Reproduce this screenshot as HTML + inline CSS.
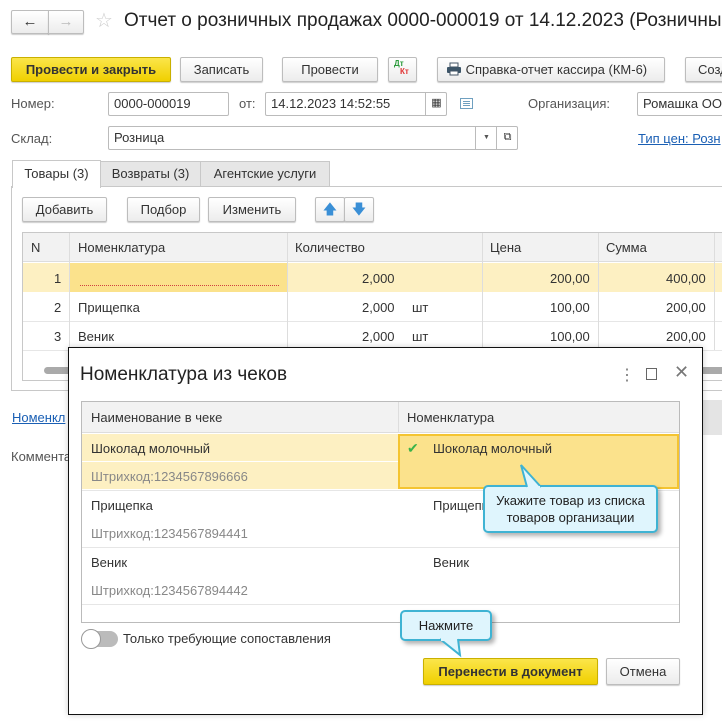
<!DOCTYPE html>
<html><head><meta charset="utf-8"><style>
*{box-sizing:border-box;margin:0;padding:0}
body{width:722px;height:721px;overflow:hidden;background:#fff;font-family:"Liberation Sans",Arial,sans-serif;font-size:13px;color:#333;position:relative}
.a{position:absolute}
.btn{position:absolute;border:1px solid #bdbdbd;border-radius:2px;background:linear-gradient(#fff,#ececec);box-shadow:0 1px 1px rgba(0,0,0,.2);text-align:center;line-height:23px;color:#333;white-space:nowrap;overflow:hidden}
.y{background:linear-gradient(#fbe54a,#f0d000);border-color:#c9b000;color:#333;font-weight:bold}
.inp{position:absolute;border:1px solid #bbb;border-radius:2px;background:#fff;height:24px;line-height:22px;padding-left:5px;color:#333;white-space:nowrap;overflow:hidden}
.lbl{position:absolute;color:#555}
.cell{position:absolute;white-space:nowrap}
.callout{position:absolute;background:#dff5fd;border:2px solid #3fb3d3;border-radius:5px;box-shadow:3px 3px 4px rgba(0,0,0,.3);text-align:center;color:#222;font-size:13px}
</style></head><body>

<!-- nav -->
<div class="btn" style="left:11px;top:10px;width:38px;height:24px;line-height:21px;font-size:15px;border-radius:2px 0 0 2px">&#8592;</div>
<div class="btn" style="left:48px;top:10px;width:36px;height:24px;line-height:21px;font-size:15px;color:#bbb;border-radius:0 2px 2px 0">&#8594;</div>
<div class="a" style="left:95px;top:8px;font-size:20px;color:#ccc">&#9734;</div>
<div class="a" style="left:124px;top:10px;font-size:19px;color:#222;white-space:nowrap">Отчет о розничных продажах 0000-000019 от 14.12.2023 (Розничный</div>

<!-- toolbar -->
<div class="btn y" style="left:11px;top:57px;width:160px;height:25px">Провести и закрыть</div>
<div class="btn" style="left:180px;top:57px;width:83px;height:25px">Записать</div>
<div class="btn" style="left:282px;top:57px;width:96px;height:25px">Провести</div>
<div class="btn" style="left:388px;top:57px;width:29px;height:25px"><span class="a" style="left:5px;top:-6px;font-size:8px;color:#2a9a3a;font-weight:bold">Дт</span><span class="a" style="left:11px;top:2px;font-size:8px;color:#e03030;font-weight:bold">Кт</span></div>
<div class="btn" style="left:437px;top:57px;width:228px;height:25px;text-align:left;padding-left:8px"><svg width="16" height="14" style="vertical-align:-2px"><rect x="4" y="1" width="8" height="4" fill="#fff" stroke="#456"/><rect x="1" y="5" width="14" height="6" rx="1" fill="#3d5568"/><rect x="4" y="9" width="8" height="4" fill="#fff" stroke="#456"/></svg> Справка-отчет кассира (КМ-6)</div>
<div class="btn" style="left:685px;top:57px;width:60px;height:25px;text-align:left;padding-left:12px">Созд</div>

<!-- fields -->
<div class="lbl" style="left:11px;top:96px">Номер:</div>
<div class="inp" style="left:108px;top:92px;width:121px">0000-000019</div>
<div class="lbl" style="left:239px;top:96px">от:</div>
<div class="inp" style="left:265px;top:92px;width:182px">14.12.2023 14:52:55</div>
<div class="a" style="left:425px;top:92px;width:22px;height:24px;border-left:1px solid #bbb;text-align:center;line-height:22px;font-size:11px">&#9638;</div>
<svg class="a" style="left:460px;top:98px" width="13" height="11"><rect x=".5" y=".5" width="12" height="10" fill="none" stroke="#6fa0c0"/><path d="M3 3.5h7M3 5.5h7M3 7.5h7" stroke="#6fa0c0"/></svg>
<div class="lbl" style="left:528px;top:96px">Организация:</div>
<div class="inp" style="left:637px;top:92px;width:100px">Ромашка ОО</div>

<div class="lbl" style="left:11px;top:131px">Склад:</div>
<div class="inp" style="left:108px;top:126px;width:410px">Розница</div>
<div class="a" style="left:475px;top:126px;width:22px;height:24px;border-left:1px solid #bbb;text-align:center;line-height:24px;font-size:7px;color:#555">&#9660;</div>
<div class="a" style="left:496px;top:126px;width:22px;height:24px;border-left:1px solid #bbb;text-align:center;line-height:22px;font-size:11px">&#10697;</div>
<div class="a" style="left:638px;top:131px;color:#1a5fb4;text-decoration:underline;white-space:nowrap">Тип цен: Розн</div>

<!-- tabs -->
<div class="a" style="left:11px;top:186px;width:711px;height:205px;border:1px solid #c8c8c8;border-right:none"></div>
<div class="a" style="left:12px;top:160px;width:89px;height:28px;background:#fff;border:1px solid #c8c8c8;border-bottom:none;text-align:center;line-height:26px">Товары (3)</div>
<div class="a" style="left:100px;top:161px;width:101px;height:25px;background:#e6e6e6;border:1px solid #c8c8c8;border-bottom:none;text-align:center;line-height:24px">Возвраты (3)</div>
<div class="a" style="left:200px;top:161px;width:130px;height:25px;background:#e6e6e6;border:1px solid #c8c8c8;border-bottom:none;text-align:center;line-height:24px">Агентские услуги</div>

<div class="btn" style="left:22px;top:197px;width:85px;height:25px">Добавить</div>
<div class="btn" style="left:127px;top:197px;width:73px;height:25px">Подбор</div>
<div class="btn" style="left:208px;top:197px;width:88px;height:25px">Изменить</div>
<div class="btn" style="left:315px;top:197px;width:30px;height:25px;color:#3a8fd6;font-size:14px;line-height:22px">&#129093;</div>
<div class="btn" style="left:344px;top:197px;width:30px;height:25px;color:#3a8fd6;font-size:14px;line-height:22px">&#129095;</div>

<!-- table -->
<div class="a" style="left:22px;top:232px;width:700px;height:149px;border:1px solid #c8c8c8;border-right:none"></div>
<div class="a" style="left:23px;top:233px;width:699px;height:29px;background:#f2f2f2;border-bottom:1px solid #ddd"></div>
<div class="a" style="left:23px;top:263px;width:699px;height:29px;background:#fdf0c2"></div>
<div class="a" style="left:69px;top:263px;width:218px;height:29px;background:#fbe28c"></div>
<div class="a" style="left:80px;top:285px;width:199px;border-top:1px dotted #d04040"></div>
<div class="a" style="left:23px;top:321px;width:699px;border-top:1px solid #e6e6e6"></div>
<div class="a" style="left:23px;top:350px;width:699px;border-top:1px solid #e6e6e6"></div>
<div class="a" style="left:69px;top:233px;height:117px;border-left:1px solid #ddd"></div>
<div class="a" style="left:287px;top:233px;height:117px;border-left:1px solid #ddd"></div>
<div class="a" style="left:482px;top:233px;height:117px;border-left:1px solid #ddd"></div>
<div class="a" style="left:598px;top:233px;height:117px;border-left:1px solid #ddd"></div>
<div class="a" style="left:714px;top:233px;height:117px;border-left:1px solid #ddd"></div>
<div class="cell" style="left:31px;top:240px">N</div>
<div class="cell" style="left:78px;top:240px">Номенклатура</div>
<div class="cell" style="left:295px;top:240px">Количество</div>
<div class="cell" style="left:490px;top:240px">Цена</div>
<div class="cell" style="left:606px;top:240px">Сумма</div>
<div class="cell" style="left:54px;top:271px">1</div>
<div class="cell" style="left:362px;top:271px">2,000</div>
<div class="cell" style="left:550px;top:271px">200,00</div>
<div class="cell" style="left:666px;top:271px">400,00</div>
<div class="cell" style="left:54px;top:300px">2</div><div class="cell" style="left:78px;top:300px">Прищепка</div>
<div class="cell" style="left:362px;top:300px">2,000</div><div class="cell" style="left:412px;top:300px">шт</div>
<div class="cell" style="left:550px;top:300px">100,00</div><div class="cell" style="left:666px;top:300px">200,00</div>
<div class="cell" style="left:54px;top:329px">3</div><div class="cell" style="left:78px;top:329px">Веник</div>
<div class="cell" style="left:362px;top:329px">2,000</div><div class="cell" style="left:412px;top:329px">шт</div>
<div class="cell" style="left:550px;top:329px">100,00</div><div class="cell" style="left:666px;top:329px">200,00</div>
<div class="a" style="left:44px;top:367px;width:30px;height:7px;background:#aaa;border-radius:4px"></div>
<div class="a" style="left:700px;top:367px;width:22px;height:7px;background:#aaa;border-radius:4px 0 0 4px"></div>

<div class="a" style="left:12px;top:410px;color:#1a5fb4;text-decoration:underline">Номенкл</div>
<div class="a" style="left:700px;top:400px;width:22px;height:35px;background:#e4e4e4"></div>
<div class="lbl" style="left:11px;top:449px">Коммента</div>

<!-- dialog -->
<div class="a" style="left:68px;top:347px;width:635px;height:368px;background:#fff;border:1px solid #111;box-shadow:0 0 6px rgba(0,0,0,.2)">
 <div class="a" style="left:11px;top:16px;font-size:19px;color:#222;white-space:nowrap">Номенклатура из чеков</div>
 <div class="a" style="left:550px;top:17px;font-size:16px;color:#777">&#8942;</div>
 <div class="a" style="left:577px;top:20px;width:11px;height:12px;border:1.5px solid #666"></div>
 <div class="a" style="left:605px;top:14px;font-size:18px;color:#777">&#10005;</div>

 <div class="a" style="left:12px;top:53px;width:599px;height:222px;border:1px solid #bbb">
  <div class="a" style="left:0;top:0;width:597px;height:31px;background:#f2f2f2;border-bottom:1px solid #ddd"></div>
  <div class="a" style="left:316px;top:0;height:31px;border-left:1px solid #ddd"></div>
  <div class="cell" style="left:9px;top:8px">Наименование в чеке</div>
  <div class="cell" style="left:325px;top:8px">Номенклатура</div>
  <div class="a" style="left:0;top:32px;width:316px;height:55px;background:#fdf0c2"></div>
  <div class="a" style="left:0;top:59px;width:316px;border-top:1px solid #fff"></div>
  <div class="a" style="left:316px;top:32px;width:281px;height:55px;background:#fbe28c;border:2px solid #f4c431"></div>
  <div class="a" style="left:0;top:88px;width:597px;border-top:1px solid #e6e6e6"></div>
  <div class="a" style="left:0;top:145px;width:597px;border-top:1px solid #e6e6e6"></div>
  <div class="a" style="left:0;top:202px;width:597px;border-top:1px solid #e6e6e6"></div>
  <div class="cell" style="left:9px;top:39px">Шоколад молочный</div>
  <div class="cell" style="left:9px;top:67px;color:#888">Штрихкод:1234567896666</div>
  <div class="cell" style="left:325px;top:38px;color:#3bb34a;font-size:14px">&#10004;</div>
  <div class="cell" style="left:351px;top:39px">Шоколад молочный</div>
  <div class="cell" style="left:9px;top:96px">Прищепка</div>
  <div class="cell" style="left:9px;top:124px;color:#888">Штрихкод:1234567894441</div>
  <div class="cell" style="left:351px;top:96px">Прищепка</div>
  <div class="cell" style="left:9px;top:153px">Веник</div>
  <div class="cell" style="left:9px;top:181px;color:#888">Штрихкод:1234567894442</div>
  <div class="cell" style="left:351px;top:153px">Веник</div>
 </div>

 <div class="a" style="left:14px;top:283px;width:35px;height:16px;background:#bbb;border-radius:8px"></div>
 <div class="a" style="left:12px;top:281px;width:20px;height:20px;background:#fff;border:1px solid #999;border-radius:50%"></div>
 <div class="cell" style="left:54px;top:283px">Только требующие сопоставления</div>

 <div class="btn y" style="left:354px;top:310px;width:175px;height:27px;line-height:25px">Перенести в документ</div>
 <div class="btn" style="left:537px;top:310px;width:74px;height:27px;line-height:25px">Отмена</div>
</div>

<!-- callouts -->
<div class="callout" style="left:483px;top:485px;width:175px;height:48px;padding-top:5px;line-height:17px">Укажите товар из списка<br>товаров организации</div>
<svg class="a" style="left:515px;top:462px" width="32" height="27"><path d="M12 25 L6 3 L26 25" fill="#dff5fd" stroke="#3fb3d3" stroke-width="2"/><rect x="13" y="24" width="12" height="4" fill="#dff5fd"/></svg>
<div class="callout" style="left:400px;top:610px;width:92px;height:31px;line-height:27px">Нажмите</div>
<svg class="a" style="left:436px;top:637px" width="30" height="22"><path d="M4 2 L24 18 L22 2" fill="#dff5fd" stroke="#3fb3d3" stroke-width="2"/><rect x="5" y="0" width="16" height="4" fill="#dff5fd"/></svg>

</body></html>
